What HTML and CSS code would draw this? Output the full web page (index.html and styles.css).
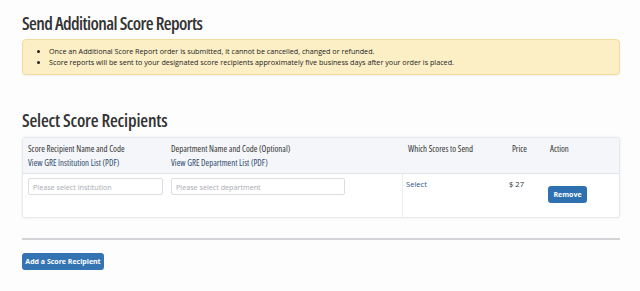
FILE: index.html
```html
<!DOCTYPE html>
<html lang="en">
<head>
  <meta charset="UTF-8">
  <meta name="viewport" content="width=device-width, initial-scale=1.0">
  <title>Send Additional Score Reports</title>
  <link rel="stylesheet" href="styles.css">
</head>
<body>
  <h1 class="page-title">Send Additional Score Reports</h1>

  <div class="notice">
    <ul>
      <li>Once an Additional Score Report order is submitted, it cannot be cancelled, changed or refunded.</li>
      <li>Score reports will be sent to your designated score recipients approximately five business days after your order is placed.</li>
    </ul>
  </div>

  <h2 class="section-title">Select Score Recipients</h2>

  <div class="recipients">
    <div class="row head">
      <div class="cell">
        Score Recipient Name and Code<br>
        <a href="#">View GRE Institution List (PDF)</a>
      </div>
      <div class="cell">
        Department Name and Code (Optional)<br>
        <a href="#">View GRE Department List (PDF)</a>
      </div>
      <div class="cell scores">Which Scores to Send</div>
      <div class="cell price">Price</div>
      <div class="cell action">Action</div>
    </div>
    <div class="row body">
      <div class="cell"><input type="text" class="field inst" placeholder="Please select institution"></div>
      <div class="cell"><input type="text" class="field dept" placeholder="Please select department"></div>
      <div class="cell scores"><a href="#">Select</a></div>
      <div class="cell price">$ 27</div>
      <div class="cell action"><button class="btn small">Remove</button></div>
    </div>
  </div>

  <hr class="divider">

  <button class="btn add">Add a Score Recipient</button>
</body>
</html>
```

FILE: styles.css
```css
* {
  box-sizing: border-box;
  margin: 0;
  padding: 0;
}

body {
  background-color: #fdfdfe;
  padding: 11px 20px 0 22px;
  font-family: "Open Sans", Arial, sans-serif;
  color: #333;
}

.page-title,
.section-title {
  font-family: "Open Sans", Roboto, sans-serif;
  font-stretch: 75%;
  font-weight: 600;
  color: #333;
}

.page-title {
  font-size: 18px;
  letter-spacing: -0.6px;
  line-height: 24px;
  margin-bottom: 4px;
}

.section-title {
  font-size: 18px;
  letter-spacing: -0.2px;
  line-height: 24px;
  margin-top: 33px;
  margin-bottom: 5px;
}

.notice {
  background-color: #fcefc6;
  border: 1px solid #f1dc9c;
  border-radius: 4px;
  padding: 6px 10px 6px 26px;
  font-size: 7.2px;
  line-height: 11px;
  color: #222;
  box-shadow: 0 1px 2px rgba(0, 0, 0, 0.06);
}

.notice ul {
  margin-left: 0;
  padding-left: 0;
}

.notice li {
  list-style: disc outside;
}

.recipients {
  border: 1px solid #e8e9ee;
  border-radius: 3px;
  box-shadow: 0 0 3px rgba(0, 0, 0, 0.07);
  background-color: #fff;
}

.row {
  display: grid;
  grid-template-columns: 143px 231px 104px 40px auto;
  padding-left: 5px;
}

.head {
  background-color: #f5f6f9;
  border-bottom: 1px solid #e3e4ea;
  height: 36px;
  padding-top: 4px;
  font-family: "Open Sans", Roboto, sans-serif;
  font-stretch: 75%;
  font-size: 8.8px;
  line-height: 14px;
  color: #333;
}

.head a {
  color: #2c4a6e;
  text-decoration: none;
}

.head .scores,
.head .price {
  padding-left: 6px;
}

.head .action {
  padding-left: 4px;
}

.body {
  height: 43px;
  font-size: 7.6px;
  color: #333;
}

.body .cell {
  padding-top: 4px;
}

.field {
  display: block;
  height: 17px;
  border: 1px solid #dcdde2;
  border-radius: 2px;
  padding: 0 4px;
  font-family: "Open Sans", Arial, sans-serif;
  font-size: 7.2px;
  color: #333;
  background-color: #fff;
  outline: none;
}

.field::placeholder {
  color: #a9abb2;
}

.inst {
  width: 135px;
}

.dept {
  width: 174px;
}

.body .scores {
  border-left: 1px solid #eceef2;
  padding-left: 3px;
  line-height: 12px;
}

.scores a {
  color: #2b5786;
  text-decoration: none;
}

.body .price {
  padding-left: 3px;
  line-height: 12px;
}

.body .action {
  padding-left: 2px;
}

.btn {
  display: block;
  background-color: #2f71b0;
  color: #fff;
  border: none;
  border-radius: 3px;
  font-family: "Open Sans", Arial, sans-serif;
  font-weight: bold;
  font-size: 7px;
  height: 17px;
  cursor: pointer;
}

.btn.small {
  width: 39px;
  margin-top: 8px;
}

.divider {
  border: none;
  border-top: 2px solid #d3d4d8;
  margin-top: 20px;
  margin-bottom: 13px;
}

.btn.add {
  width: 82px;
  background-color: #3574b3;
}
```
